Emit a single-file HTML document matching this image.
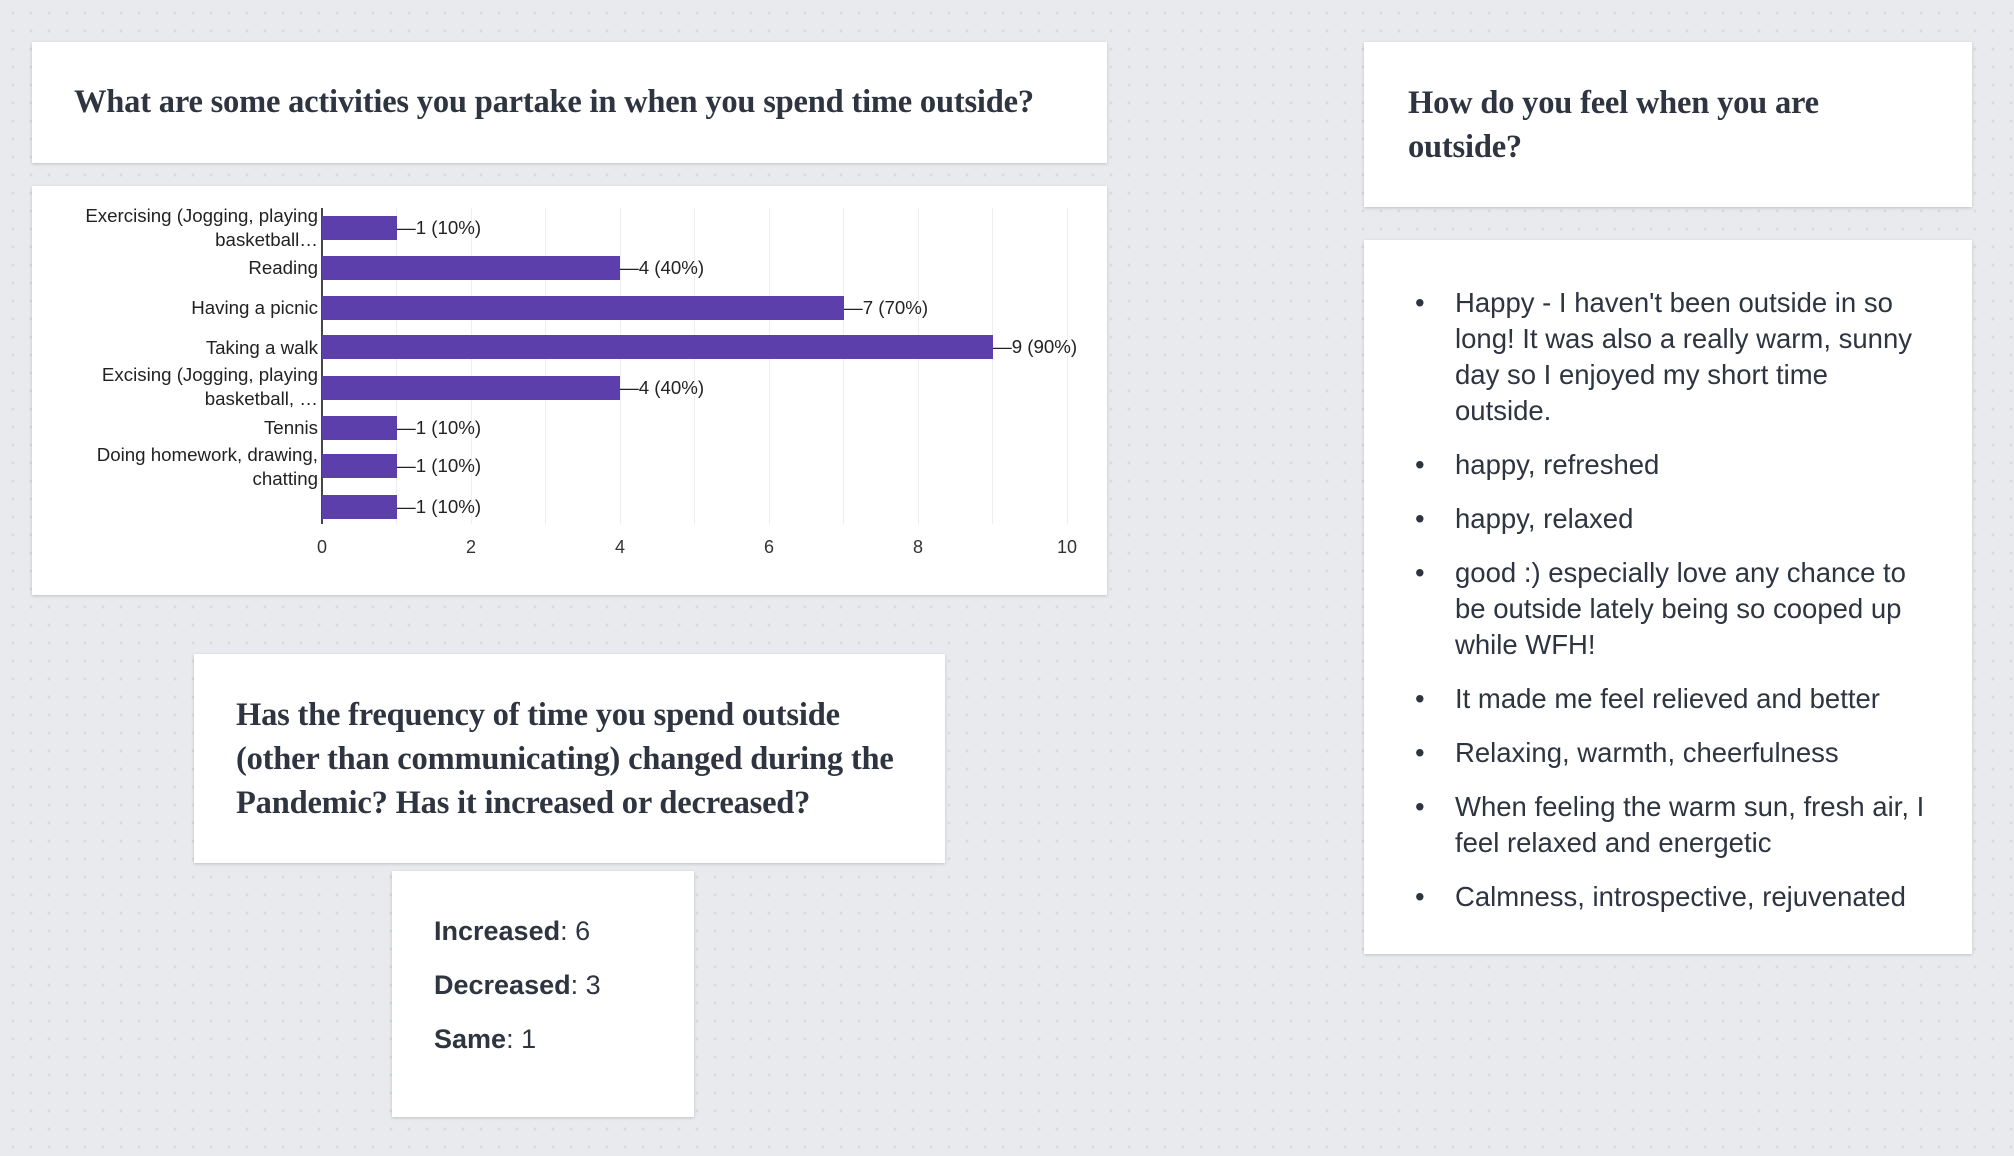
<!DOCTYPE html>
<html><head><meta charset="utf-8"><style>
*{margin:0;padding:0;box-sizing:border-box}
body{width:2014px;height:1156px;overflow:hidden;background-color:#e9eaed;background-image:radial-gradient(circle,#d9dade 1.3px,transparent 1.6px);background-size:18px 18px;background-position:4px 4px;position:relative;font-family:"Liberation Sans",sans-serif;color:#2e3440}
.card{position:absolute;background:#fff;box-shadow:0 1px 3px rgba(0,0,0,.18)}
.serif{font-family:"Liberation Serif",serif;font-weight:bold;font-size:32.5px;letter-spacing:-0.2px;color:#2e3440}
.lbl{position:absolute;right:0;font-size:18.7px;color:#222;text-align:right;line-height:24px;white-space:nowrap}
.bar{position:absolute;left:322px;height:24px;background:#5c3fab}
.val{position:absolute;font-size:18.7px;color:#222;white-space:nowrap;line-height:20px}
.grid{position:absolute;top:208px;height:316px;width:1px;background:#eee}
.ax{position:absolute;top:537px;font-size:18px;color:#333;width:30px;margin-left:-15px;text-align:center}
ul{list-style:none}
li{position:relative;padding-left:38px;margin-bottom:18px;font-size:27.5px;line-height:36px;color:#2e3440}
li:before{content:"•";position:absolute;left:-2px;top:0}
.s p{font-size:27px;margin-bottom:19px;line-height:35px}
</style></head><body>
<div class="card" style="left:32px;top:42px;width:1075px;height:121px">
<div class="serif" style="position:absolute;left:42px;top:42px;white-space:nowrap">What are some activities you partake in when you spend time outside?</div></div>
<div class="card" style="left:32px;top:186px;width:1075px;height:409px"></div>
<div style="position:absolute;left:0;top:0">
<div class="grid" style="left:396px"></div><div class="grid" style="left:471px"></div><div class="grid" style="left:545px"></div><div class="grid" style="left:620px"></div><div class="grid" style="left:694px"></div><div class="grid" style="left:769px"></div><div class="grid" style="left:843px"></div><div class="grid" style="left:918px"></div><div class="grid" style="left:992px"></div><div class="grid" style="left:1067px"></div>
<div style="position:absolute;left:321px;top:208px;width:2px;height:316px;background:#444"></div>
<div style="position:absolute;left:0;top:0;width:318px;height:600px">
<div class="lbl" style="top:204px">Exercising (Jogging, playing<br>basketball…</div>
<div class="lbl" style="top:256px">Reading</div>
<div class="lbl" style="top:296px">Having a picnic</div>
<div class="lbl" style="top:336px">Taking a walk</div>
<div class="lbl" style="top:363px">Excising (Jogging, playing<br>basketball, …</div>
<div class="lbl" style="top:416px">Tennis</div>
<div class="lbl" style="top:443px">Doing homework, drawing,<br>chatting</div>
</div>
<div class="bar" style="top:216px;width:75px"></div>
<div class="bar" style="top:256px;width:298px"></div>
<div class="bar" style="top:296px;width:522px"></div>
<div class="bar" style="top:335px;width:671px"></div>
<div class="bar" style="top:376px;width:298px"></div>
<div class="bar" style="top:416px;width:75px"></div>
<div class="bar" style="top:454px;width:75px"></div>
<div class="bar" style="top:495px;width:75px"></div>
<div class="val" style="left:397px;top:218px">—1 (10%)</div>
<div class="val" style="left:620px;top:258px">—4 (40%)</div>
<div class="val" style="left:844px;top:298px">—7 (70%)</div>
<div class="val" style="left:993px;top:337px">—9 (90%)</div>
<div class="val" style="left:620px;top:378px">—4 (40%)</div>
<div class="val" style="left:397px;top:418px">—1 (10%)</div>
<div class="val" style="left:397px;top:456px">—1 (10%)</div>
<div class="val" style="left:397px;top:497px">—1 (10%)</div>
<div class="ax" style="left:322px">0</div><div class="ax" style="left:471px">2</div><div class="ax" style="left:620px">4</div><div class="ax" style="left:769px">6</div><div class="ax" style="left:918px">8</div><div class="ax" style="left:1067px">10</div>
</div>
<div class="card" style="left:194px;top:654px;width:751px;height:209px">
<div class="serif" style="position:absolute;left:42px;top:39px;line-height:44px;width:685px">Has the frequency of time you spend outside (other than communicating) changed during the Pandemic? Has it increased or decreased?</div></div>
<div class="card s" style="left:392px;top:871px;width:302px;height:246px;padding:43px 0 0 42px">
<p><b>Increased</b>: 6</p><p><b>Decreased</b>: 3</p><p><b>Same</b>: 1</p></div>
<div class="card" style="left:1364px;top:42px;width:608px;height:165px">
<div class="serif" style="position:absolute;left:44px;top:39px;line-height:44px">How do you feel when you are<br>outside?</div></div>
<div class="card" style="left:1364px;top:240px;width:608px;height:714px;padding:45px 0 0 53px">
<ul style="width:508px">
<li>Happy - I haven't been outside in so long! It was also a really warm, sunny day so I enjoyed my short time outside.</li>
<li>happy, refreshed</li>
<li>happy, relaxed</li>
<li>good :) especially love any chance to be outside lately being so cooped up while WFH!</li>
<li>It made me feel relieved and better</li>
<li>Relaxing, warmth, cheerfulness</li>
<li>When feeling the warm sun, fresh air, I feel relaxed and energetic</li>
<li>Calmness, introspective, rejuvenated</li>
</ul></div>
</body></html>
